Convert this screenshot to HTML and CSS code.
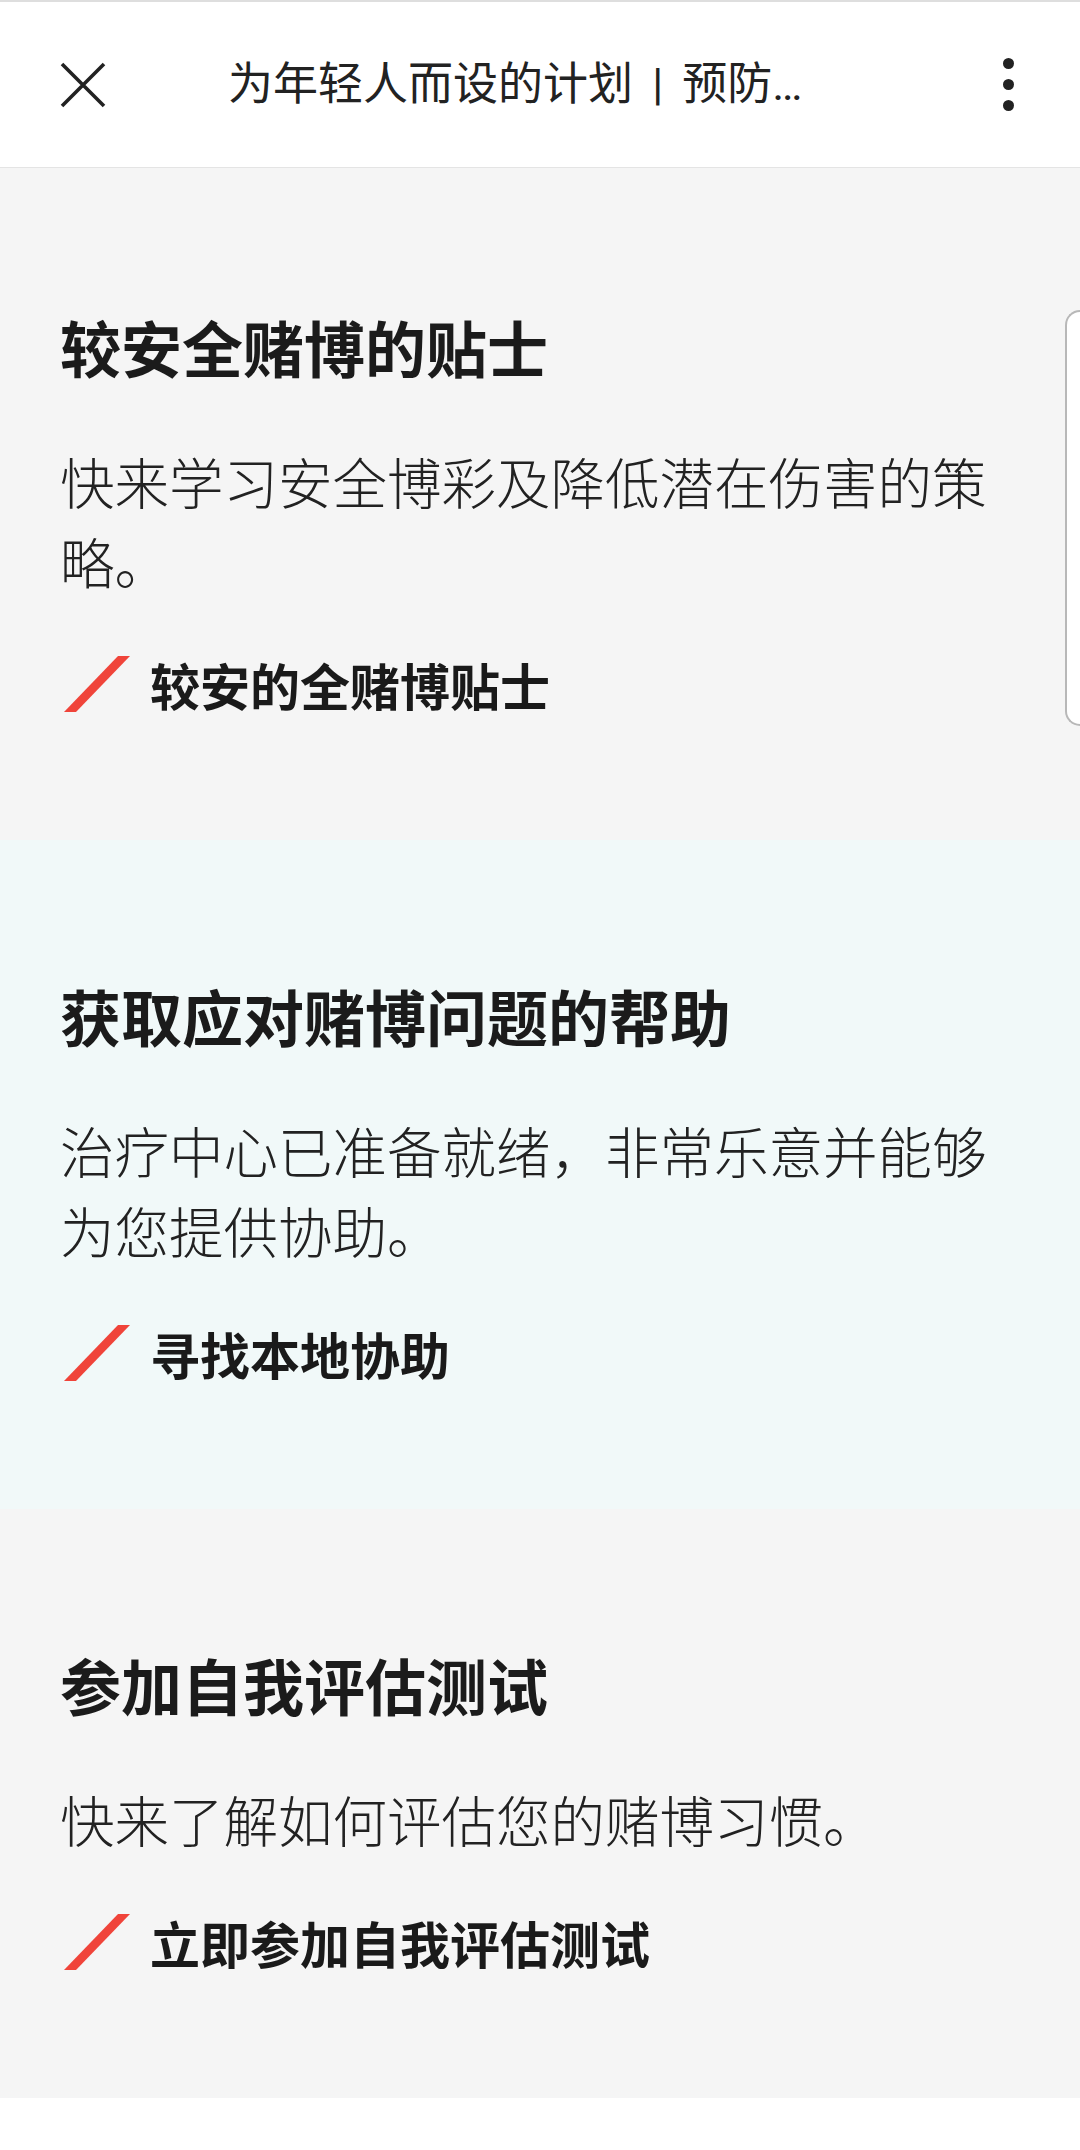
FILE: index.html
```html
<!DOCTYPE html>
<html lang="zh-CN">
<head>
<meta charset="utf-8">
<title>为年轻人而设的计划 | 预防问题赌博</title>
<link rel="stylesheet" href="styles.css">
</head>
<body>
<div class="topline"></div>
<header class="appbar">
  <button class="close" aria-label="关闭">
    <svg width="46" height="46" viewBox="0 0 46 46"><path d="M2 2 L44 44 M44 2 L2 44" stroke="#222" stroke-width="3.6" fill="none"/></svg>
  </button>
  <div class="title">为年轻人而设的计划 | 预防…</div>
  <div class="menu" aria-label="更多"><span></span><span></span><span></span></div>
</header>
<main>
  <section class="card card-first">
    <h2 class="card-title">较安全赌博的贴士</h2>
    <p class="card-text">快来学习安全博彩及降低潜在伤害的策略。</p>
    <a class="card-link" href="#">
      <svg class="slash" width="66" height="56" viewBox="0 0 66 56"><polygon points="54,0 66,0 12,56 0,56" fill="#f0443a"/></svg>
      <span>较安的全赌博贴士</span>
    </a>
  </section>
  <section class="card card-tint">
    <h2 class="card-title">获取应对赌博问题的帮助</h2>
    <p class="card-text">治疗中心已准备就绪，非常乐意并能够为您提供协助。</p>
    <a class="card-link" href="#">
      <svg class="slash" width="66" height="56" viewBox="0 0 66 56"><polygon points="54,0 66,0 12,56 0,56" fill="#f0443a"/></svg>
      <span>寻找本地协助</span>
    </a>
  </section>
  <section class="card">
    <h2 class="card-title">参加自我评估测试</h2>
    <p class="card-text">快来了解如何评估您的赌博习惯。</p>
    <a class="card-link" href="#">
      <svg class="slash" width="66" height="56" viewBox="0 0 66 56"><polygon points="54,0 66,0 12,56 0,56" fill="#f0443a"/></svg>
      <span>立即参加自我评估测试</span>
    </a>
  </section>
</main>
<div class="side-tab"></div>
</body>
</html>
```
FILE: styles.css
```css
html, body {
  margin: 0;
  padding: 0;
  background: #ffffff;
}
body {
  width: 1080px;
  min-height: 2150px;
  font-family: "Noto Sans CJK SC", "Noto Sans", sans-serif;
  color: #1c1c1c;
}
.topline {
  height: 2px;
  background: #dedede;
}
.appbar {
  height: 166px;
  box-sizing: border-box;
  border-bottom: 1px solid #e4e4e4;
  background: #ffffff;
  display: flex;
  align-items: center;
  padding: 0 66px 0 60px;
}
.close {
  width: 46px;
  height: 46px;
  padding: 0;
  margin: 0;
  border: 0;
  background: none;
  display: flex;
}
.title {
  flex: 1;
  margin-left: 122px;
  font-family: Roboto, "Noto Sans CJK SC", sans-serif;
  font-size: 45px;
  line-height: 60px;
  word-spacing: 8px;
  color: #222222;
  white-space: nowrap;
  overflow: hidden;
}
.menu {
  display: flex;
  flex-direction: column;
  gap: 10px;
  align-items: center;
}
.menu span {
  width: 11px;
  height: 11px;
  border-radius: 50%;
  background: #222222;
}
.card {
  background: #f5f5f5;
  padding: 136px 60px 126px 60px;
}
.card-first {
  padding-top: 139px;
}
.card-tint {
  background: #f1f9f9;
}
.card-title {
  margin: 0 0 54px 0;
  font-size: 61px;
  line-height: 80px;
  font-weight: 700;
  color: #1b1b1b;
}
.card-text {
  margin: 0 0 53px 0;
  font-size: 54.5px;
  line-height: 80px;
  font-weight: 300;
  color: #222222;
}
.card-link {
  display: flex;
  align-items: center;
  height: 60px;
  gap: 20px;
  text-decoration: none;
  color: #1a1a1a;
  font-size: 50px;
  line-height: 60px;
  font-weight: 700;
}
.slash {
  margin-left: 4px;
  flex: none;
}
.side-tab {
  position: absolute;
  top: 310px;
  right: 0;
  width: 13px;
  height: 412px;
  background: #ffffff;
  border: 2px solid #b8b8b8;
  border-right: 0;
  border-radius: 16px 0 0 16px;
}
```
